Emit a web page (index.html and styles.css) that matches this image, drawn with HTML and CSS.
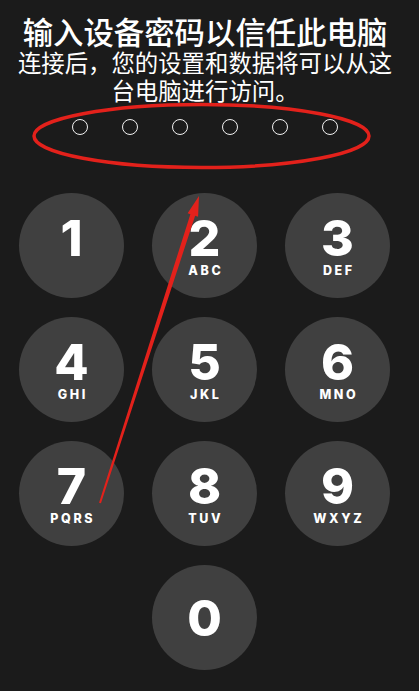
FILE: index.html
```html
<!DOCTYPE html>
<html lang="zh-CN">
<head>
<meta charset="utf-8">
<title>输入设备密码</title>
<link rel="stylesheet" href="styles.css">
</head>
<body>
<main class="screen">
  <header class="head">
    <h1 class="title">输入设备密码以信任此电脑</h1>
    <p class="subtitle">连接后，您的设置和数据将可以从这<br>台电脑进行访问。</p>
  </header>
  <div class="dots">
    <span class="dot"></span><span class="dot"></span><span class="dot"></span>
    <span class="dot"></span><span class="dot"></span><span class="dot"></span>
  </div>
  <div class="keypad">
    <div class="key"><span class="num">1</span><span class="let">&nbsp;</span></div>
    <div class="key"><span class="num">2</span><span class="let">ABC</span></div>
    <div class="key"><span class="num">3</span><span class="let">DEF</span></div>
    <div class="key"><span class="num">4</span><span class="let">GHI</span></div>
    <div class="key"><span class="num">5</span><span class="let">JKL</span></div>
    <div class="key"><span class="num">6</span><span class="let">MNO</span></div>
    <div class="key"><span class="num">7</span><span class="let">PQRS</span></div>
    <div class="key"><span class="num">8</span><span class="let">TUV</span></div>
    <div class="key"><span class="num">9</span><span class="let">WXYZ</span></div>
    <div class="key key-zero"><span class="num">0</span></div>
  </div>
  <svg class="marks" width="419" height="691" viewBox="0 0 419 691" aria-hidden="true">
    <ellipse cx="201.5" cy="136" rx="167.5" ry="31.5" fill="none" stroke="#e3211b" stroke-width="3.5"/>
    <polygon fill="#e3211b" points="99.05,502.69 190.38,214.23 187.63,213.34 199,196 198.09,216.72 195.14,215.77 100.95,503.31"/>
  </svg>
</main>
</body>
</html>
```
FILE: styles.css
```css
html, body {
  margin: 0;
  padding: 0;
  background: #1b1b1b;
}

.screen {
  position: relative;
  width: 419px;
  height: 691px;
  overflow: hidden;
  background: #1b1b1b;
  color: #ffffff;
  font-family: "Noto Sans CJK SC", "Noto Sans", sans-serif;
}

.head {
  width: 410px;
  padding-top: 15px;
  text-align: center;
}

.title {
  margin: 0;
  font-size: 30.4px;
  line-height: 32px;
  font-weight: 500;
  white-space: nowrap;
}

.subtitle {
  margin: 2px 0 0;
  font-size: 23.4px;
  line-height: 27.5px;
  font-weight: 400;
  white-space: nowrap;
}

.dots {
  display: flex;
  justify-content: center;
  gap: 34px;
  width: 410px;
  margin-top: 15px;
}

.dot {
  width: 14px;
  height: 14px;
  border: 1.6px solid #f2f2f2;
  border-radius: 50%;
}

.keypad {
  display: grid;
  grid-template-columns: repeat(3, 105px);
  grid-auto-rows: 105px;
  column-gap: 28px;
  row-gap: 19px;
  padding-left: 19px;
  margin-top: 58px;
}

.key {
  display: flex;
  flex-direction: column;
  align-items: center;
  box-sizing: border-box;
  padding-top: 20px;
  border-radius: 50%;
  background: #404040;
  font-family: Inter, "Liberation Sans", sans-serif;
}

.num {
  font-size: 50px;
  line-height: 50px;
  font-weight: 800;
}

.let {
  margin-top: 1px;
  padding-left: 2.6px;
  font-size: 12.5px;
  line-height: 14px;
  font-weight: 800;
  letter-spacing: 2.6px;
}

.key-zero {
  grid-column: 2;
  justify-content: center;
  padding-top: 0;
}

.marks {
  position: absolute;
  left: 0;
  top: 0;
  pointer-events: none;
}
```
